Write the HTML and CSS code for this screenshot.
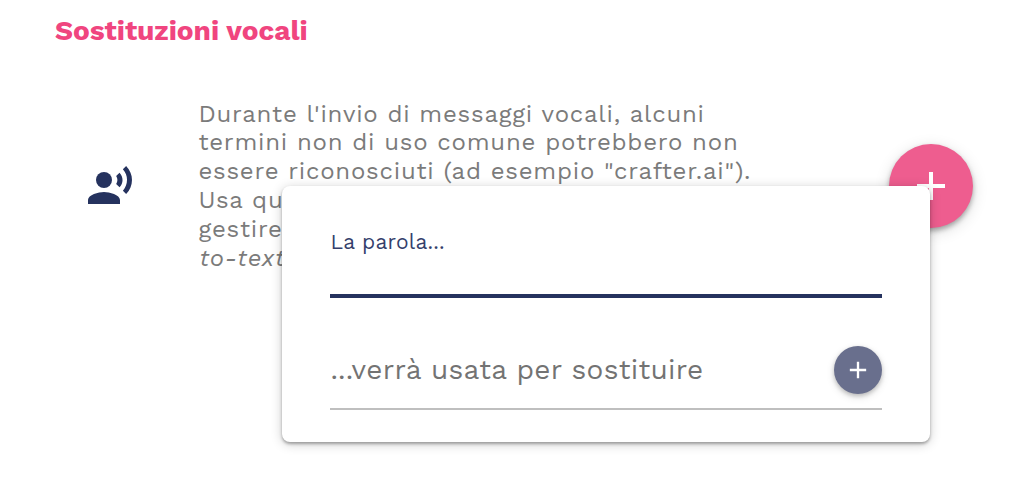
FILE: index.html
```html
<!DOCTYPE html>
<html lang="it">
<head>
  <meta charset="UTF-8">
  <meta name="viewport" content="width=device-width, initial-scale=1.0">
  <title>Sostituzioni vocali</title>
  <link rel="stylesheet" href="styles.css">
</head>
<body>
  <h1 class="title">Sostituzioni vocali</h1>

  <div class="section">
    <svg class="voice-icon" viewBox="0 0 24 24">
      <circle cx="9" cy="9" r="4"/>
      <path d="M9 15c-2.67 0-8 1.34-8 4v2h16v-2c0-2.66-5.33-4-8-4zm7.76-9.64l-1.68 1.69c.84 1.18.84 2.71 0 3.89l1.68 1.69c2.02-2.02 2.02-5.07 0-7.27zM20.07 2l-1.63 1.63c2.77 3.02 2.77 7.56 0 10.74L20.07 16c3.9-3.89 3.91-9.95 0-14z"/>
    </svg>
    <p class="description">
      <span class="line">Durante l'invio di messaggi vocali, alcuni</span>
      <span class="line">termini non di uso comune potrebbero non</span>
      <span class="line">essere riconosciuti (ad esempio "crafter.ai").</span>
      <span class="line">Usa qu</span>
      <span class="line">gestire</span>
      <em class="line">to-text</em>
    </p>
    <button type="button" class="fab" aria-label="Aggiungi">
      <svg viewBox="0 0 24 24"><path d="M19 13h-6v6h-2v-6H5v-2h6V5h2v6h6v2z"/></svg>
    </button>
  </div>

  <!-- Popup for a new substitution -->
  <form class="popup">
    <div class="field field-active">
      <label for="word">La parola...</label>
      <input type="text" id="word">
    </div>
    <div class="field field-replace">
      <label for="replace">...verrà usata per sostituire</label>
      <button type="button" class="mini-fab" id="replace" aria-label="Conferma">
        <svg viewBox="0 0 24 24"><path d="M19 13h-6v6h-2v-6H5v-2h6V5h2v6h6v2z"/></svg>
      </button>
    </div>
  </form>
</body>
</html>
```

FILE: styles.css
```css
* {
  margin: 0;
  padding: 0;
  box-sizing: border-box;
  font-family: "Work Sans", Inter, "Liberation Sans", sans-serif;
}

body {
  position: relative;
  height: 501px;
  background-color: #fff;
  overflow: hidden;
}

.title {
  padding: 14px 0 0 55px;
  font-size: 28px;
  line-height: 34px;
  font-weight: 700;
  letter-spacing: -0.05px;
  color: #f0457f;
}

.section {
  display: flex;
  align-items: center;
  margin-top: 51.6px;
  padding: 0 51px 0 86.4px;
}

.voice-icon {
  width: 48px;
  height: 48px;
  fill: #25325e;
}

.description {
  flex: 1;
  margin-left: 64px;
  font-size: 24px;
  color: #7b7b7b;
}

.line {
  display: block;
  height: 28.8px;
  line-height: 28.8px;
  letter-spacing: 0.77px;
  white-space: nowrap;
}

em.line {
  padding-left: 1px;
}

/* Floating add buttons */
.fab, .mini-fab {
  display: flex;
  align-items: center;
  justify-content: center;
  flex-shrink: 0;
  border: none;
  border-radius: 50%;
  cursor: pointer;
}

.fab {
  width: 84px;
  height: 84px;
  background-color: #ee5d8f;
  box-shadow: 0 3px 5px rgba(0, 0, 0, 0.3), 0 4px 16px rgba(0, 0, 0, 0.14);
}

.fab svg {
  width: 48px;
  height: 48px;
  fill: #fff;
}

.mini-fab {
  width: 48px;
  height: 48px;
  background-color: #696f8d;
  box-shadow: 0 2px 4px rgba(0, 0, 0, 0.2), 0 3px 8px rgba(0, 0, 0, 0.12);
}

.mini-fab svg {
  width: 28px;
  height: 28px;
  fill: #fff;
}

/* Popup */
.popup {
  position: absolute;
  top: 186.4px;
  left: 282.4px;
  width: 648px;
  height: 256px;
  padding: 40px 48px 0;
  background-color: #fff;
  border-radius: 8px;
  box-shadow: 0 2px 3px rgba(0, 0, 0, 0.3), 0 2px 12px rgba(0, 0, 0, 0.2);
}

.field-active {
  height: 72px;
  border-bottom: 4px solid #25325e;
}

.field-active label {
  display: block;
  font-size: 21px;
  line-height: 31px;
  letter-spacing: 0.2px;
  color: #353f6c;
}

.field-active input {
  display: block;
  width: 100%;
  height: 36px;
  border: none;
  outline: none;
  background: transparent;
}

.field-replace {
  display: flex;
  align-items: flex-start;
  justify-content: space-between;
  height: 64px;
  margin-top: 48px;
  border-bottom: 2px solid #bfbfbf;
}

.field-replace label {
  font-size: 28px;
  line-height: 48px;
  letter-spacing: 0.27px;
  color: #737373;
}
```
